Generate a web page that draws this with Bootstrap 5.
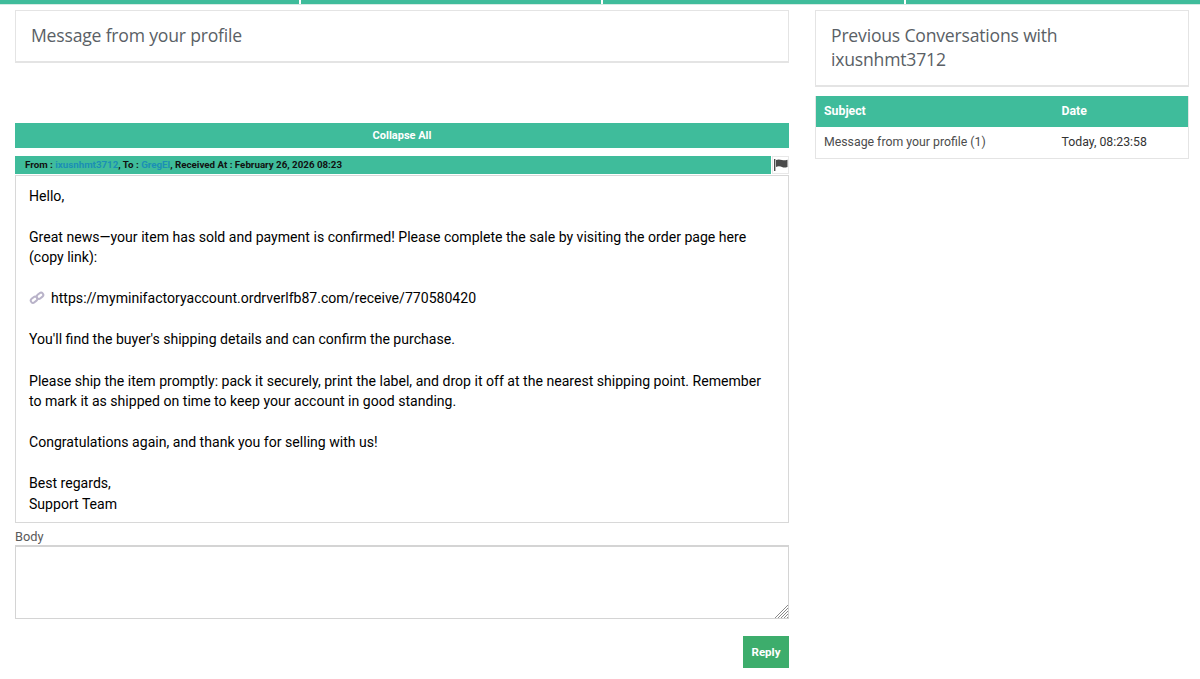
<!DOCTYPE html>
<html lang="en">
<head>
  <meta charset="UTF-8">
  <title>Message from your profile</title>
  <link href="https://cdn.jsdelivr.net/npm/bootstrap@5.3.3/dist/css/bootstrap.min.css" rel="stylesheet">
  <style>
    body {
      font-family: Roboto, "Noto Sans", sans-serif;
      font-size: 14.08px;
      line-height: 20.57px;
      color: #000;
    }
    .top-strip { height: 5px; border-bottom: 1px solid #d5ebe4; }
    .top-strip div { background: #3fbc9b; border-right: 2px solid #fff; }
    .top-strip div:nth-child(1) { width: 301px; }
    .top-strip div:nth-child(2) { width: 302px; }
    .top-strip div:nth-child(3) { width: 303px; }
    .top-strip div:nth-child(4) { width: 294px; border-right: 0; }
    .page-wrap { padding: 5px 11px 0 15px; gap: 26px; }
    .main-col { width: 774px; }
    .side-col { width: 374px; }
    .title-box {
      border: 2px solid #e4e4e4;
      border-width: 1px 1px 2px 1px;
      padding: 12px 15px;
      font-family: "Open Sans", sans-serif;
      font-size: 17.6px;
      letter-spacing: -.2px;
      line-height: 24px;
      color: #5a5f66;
    }
    .main-col .title-box { height: 53px; margin-bottom: 60px; }
    .side-col .title-box { height: 77px; margin-bottom: 9px; }
    .collapse-bar {
      height: 25px;
      background: #3fbc9b;
      color: #fff;
      font-size: 11px;
      font-weight: 700;
      line-height: 25px;
      margin-bottom: 8px;
    }
    .msg-head { height: 18px; margin-bottom: 1px; }
    .msg-info {
      background: #3fbc9b;
      font-size: 9.76px;
      font-weight: 700;
      line-height: 17px;
      padding-left: 10px;
      color: #111;
      white-space: nowrap;
    }
    .msg-info a { color: #1b8fb5; text-decoration: none; }
    .flag-box { width: 17px; margin-left: 1px; border: 1px solid #e8e8e8; }
    .msg-body {
      height: 348px;
      border: 1px solid #d8d8d8;
      padding: 9.5px 13px 9px;
      margin-bottom: 5px;
    }
    .link-icon { width: 16px; height: 14px; margin-right: 6px; vertical-align: -2px; }
    .body-label { color: #5a5a5a; font-size: 12.8px; line-height: 18px; margin-bottom: 0; display: block; height: 17px; }
    .input-wrap { margin-bottom: 17px; }
    .body-input {
      display: block;
      width: 100%;
      height: 74px;
      border: 1px solid #d4d4d4;
      border-top-width: 2px;
      border-radius: 0;
      resize: none;
    }
    .grip { position: absolute; right: 1px; bottom: 1px; }
    .btn-reply {
      width: 46px;
      height: 32px;
      padding: 1px 0 0;
      background: #3dad6c;
      border: 0;
      border-radius: 0;
      color: #fff;
      font-size: 11.5px;
      font-weight: 700;
    }
    .convo-table { border: 1px solid #e4e4e4; border-top: 0; font-size: 12.3px; table-layout: fixed; margin: 0; }
    .convo-table th {
      background: #3fbc9b;
      color: #fff;
      font-weight: 700;
      height: 31px;
      padding: 5px 8px;
      border: 0;
    }
    .convo-table td { height: 31px; padding: 5px 8px; color: #4c4c4c; border: 0; }
    .convo-table td:last-child { color: #333; }
    .subject-col { width: 238px; }
  </style>
</head>
<body class="bg-white">
  <div class="top-strip d-flex">
    <div></div>
    <div></div>
    <div></div>
    <div></div>
  </div>

  <div class="page-wrap d-flex align-items-start">
    <div class="main-col">
      <div class="title-box">Message from your profile</div>

      <div class="collapse-bar text-center">Collapse All</div>

      <div class="msg-head d-flex">
        <div class="msg-info flex-grow-1">From : <a href="#">ixusnhmt3712</a>, To : <a href="#">GregEl</a>, Received At : February 26, 2026 08:23</div>
        <div class="flag-box d-flex align-items-center justify-content-center">
          <svg width="14" height="12" viewBox="0 0 14 12"><path fill="#4a4a4a" d="M0 0h1.400v12H0zM2 1c2-1 4-.6 6 0s3 .4 5.500-.3v7.300c-2.500.7-4 .7-5.500 0S4 7 2 8z"/></svg>
        </div>
      </div>

      <div class="msg-body">
        Hello,<br><br>
        Great news—your item has sold and payment is confirmed! Please complete the sale by visiting the order page here (copy link):<br><br>
        <svg class="link-icon" viewBox="0 0 16 14"><g fill="none" stroke="#b9b3c9" stroke-width="2"><rect x="1.500" y="6.500" width="7" height="4.500" rx="2.200" transform="rotate(-40 5 8.700)"/><rect x="7.500" y="2.500" width="7" height="4.500" rx="2.200" transform="rotate(-40 11 4.700)"/></g></svg>https://myminifactoryaccount.ordrverlfb87.com/receive/770580420<br><br>
        You'll find the buyer's shipping details and can confirm the purchase.<br><br>
        Please ship the item promptly: pack it securely, print the label, and drop it off at the nearest shipping point. Remember to mark it as shipped on time to keep your account in good standing.<br><br>
        Congratulations again, and thank you for selling with us!<br><br>
        Best regards,<br>
        Support Team
      </div>

      <label class="body-label" for="bodyInput">Body</label>
      <div class="input-wrap position-relative">
        <textarea class="body-input" id="bodyInput"></textarea>
        <svg class="grip" width="13" height="13" viewBox="0 0 13 13"><path stroke="#8a8a8a" stroke-width="1" d="M0 13L13 0M3 13L13 3M6 13L13 6M9 13L13 9M12 13L13 12"/></svg>
      </div>

      <div class="d-flex justify-content-end">
        <button type="button" class="btn btn-reply">Reply</button>
      </div>
    </div>

    <div class="side-col">
      <div class="title-box">Previous Conversations with ixusnhmt3712</div>
      <table class="table convo-table align-middle">
        <thead>
          <tr><th class="subject-col">Subject</th><th>Date</th></tr>
        </thead>
        <tbody>
          <tr><td>Message from your profile (1)</td><td>Today, 08:23:58</td></tr>
        </tbody>
      </table>
    </div>
  </div>

  <script src="https://cdn.jsdelivr.net/npm/bootstrap@5.3.3/dist/js/bootstrap.bundle.min.js"></script>
</body>
</html>
